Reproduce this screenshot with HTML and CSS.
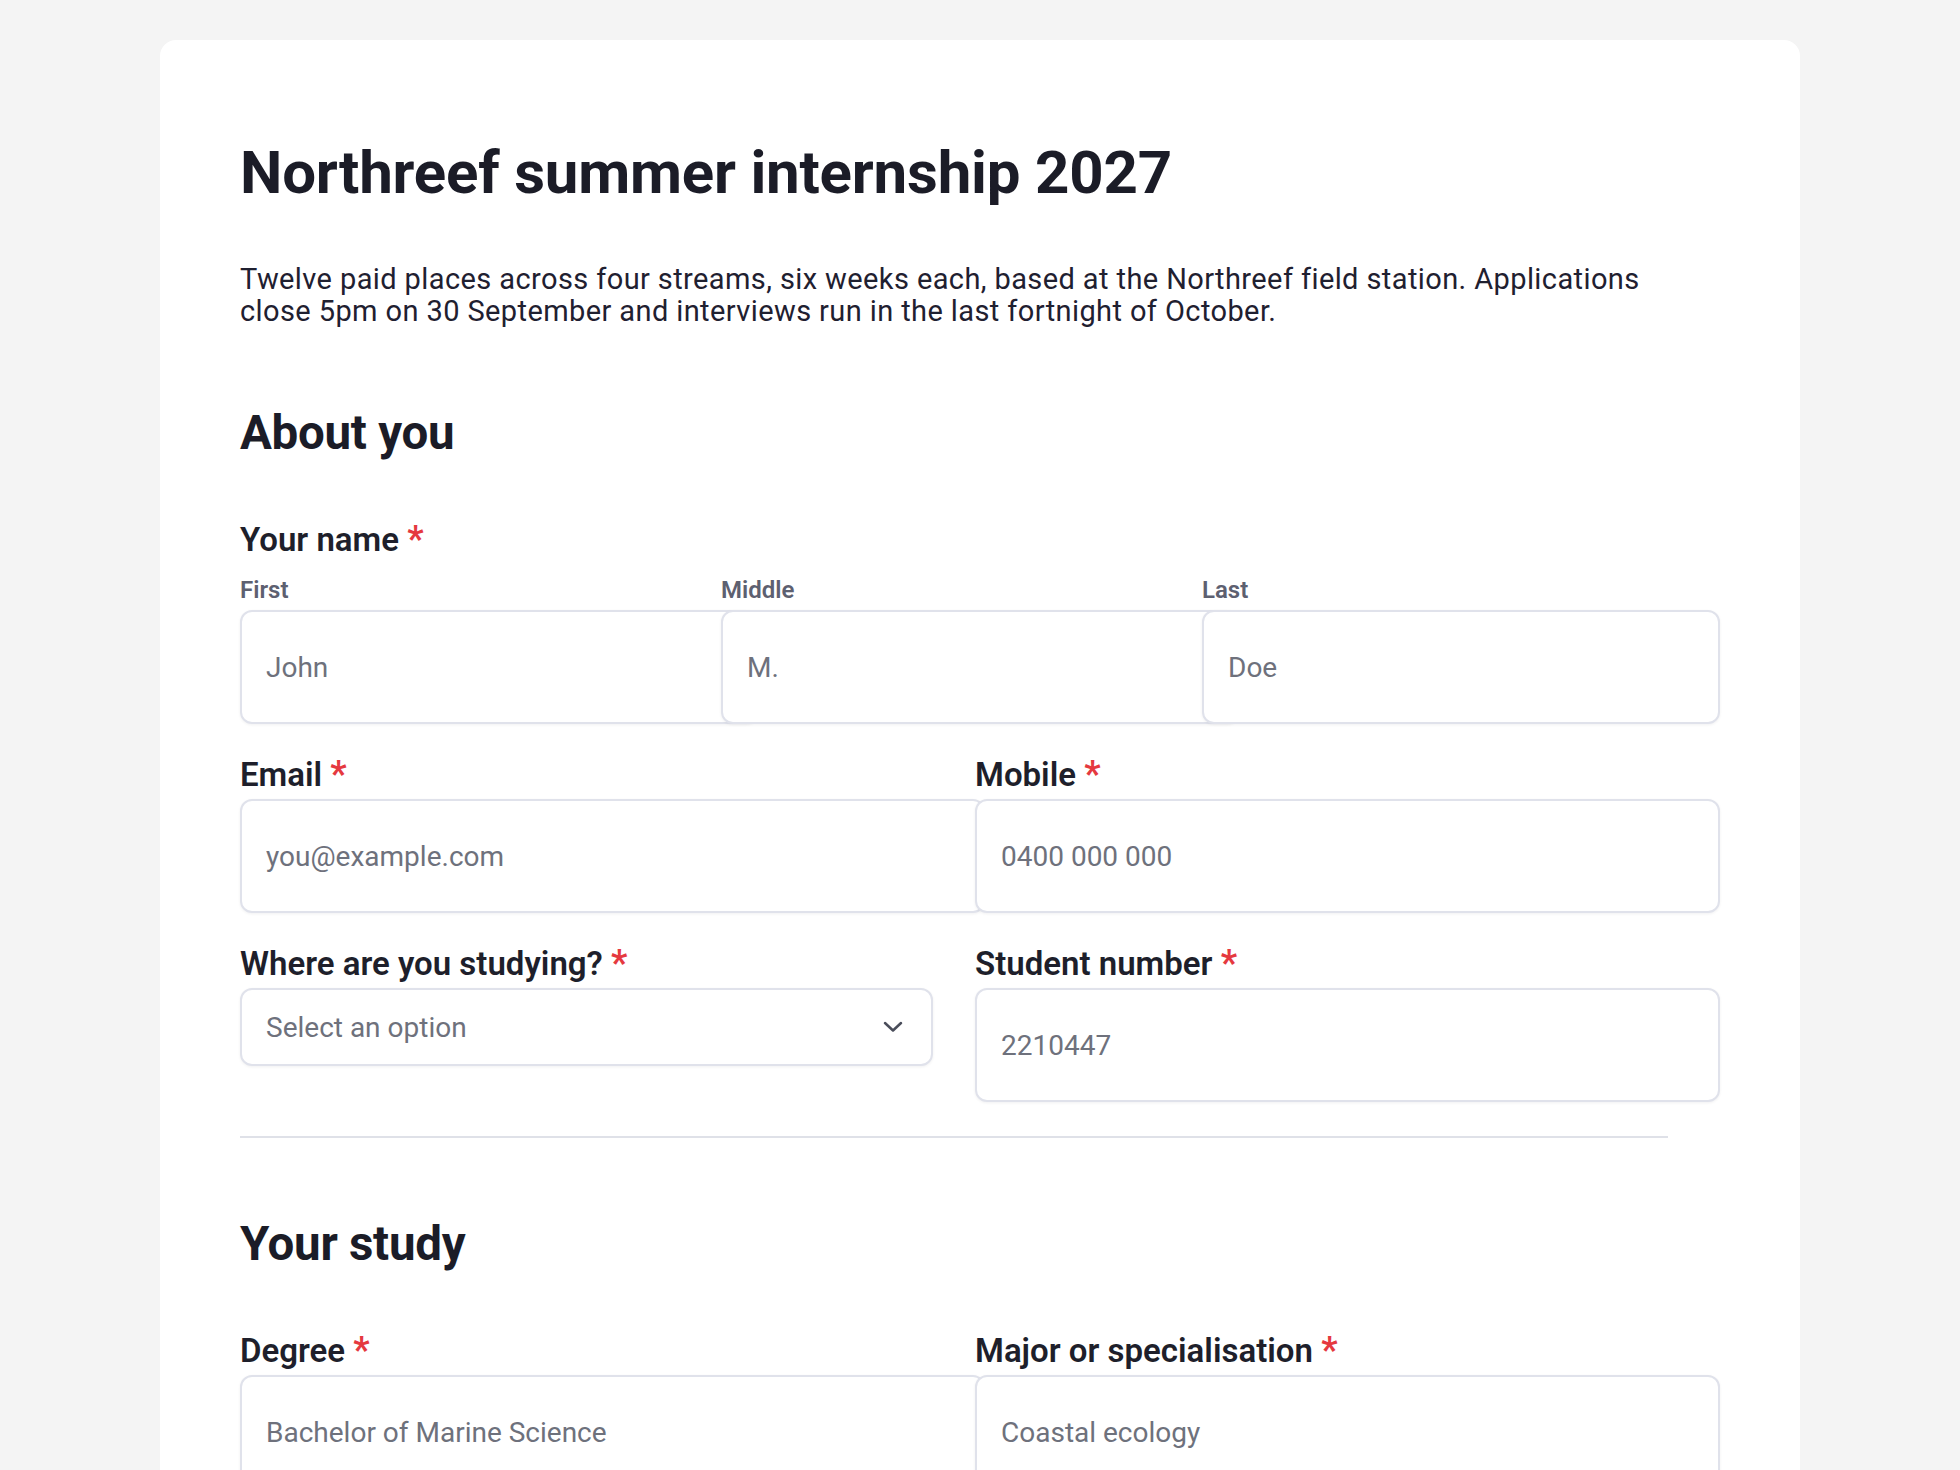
FILE: index.html
```html
<!DOCTYPE html>
<html lang="en">
<head>
<meta charset="utf-8">
<title>Northreef summer internship 2027</title>
<link rel="stylesheet" href="styles.css">
</head>
<body>
<main class="card">
  <div class="card-inner">
    <h1 class="title">Northreef summer internship 2027</h1>
    <p class="intro">Twelve paid places across four streams, six weeks each, based at the Northreef field station. Applications close 5pm on 30 September and interviews run in the last fortnight of October.</p>

    <section class="section">
      <h2 class="section-title">About you</h2>
      <div class="fields">
        <div class="field-group">
          <div class="label">Your name <span class="req">*</span></div>
          <div class="grid-3">
            <div class="field">
              <label class="sublabel" for="first">First</label>
              <input class="input" id="first" type="text" placeholder="John">
            </div>
            <div class="field">
              <label class="sublabel" for="middle">Middle</label>
              <input class="input" id="middle" type="text" placeholder="M.">
            </div>
            <div class="field">
              <label class="sublabel" for="last">Last</label>
              <input class="input" id="last" type="text" placeholder="Doe">
            </div>
          </div>
        </div>
        <div class="grid-2">
          <div class="field">
            <label class="label" for="email">Email <span class="req">*</span></label>
            <input class="input" id="email" type="email" placeholder="you@example.com">
          </div>
          <div class="field">
            <label class="label" for="mobile">Mobile <span class="req">*</span></label>
            <input class="input" id="mobile" type="tel" placeholder="0400 000 000">
          </div>
          <div class="field">
            <label class="label" for="uni">Where are you studying? <span class="req">*</span></label>
            <div class="select-wrap">
              <select class="select" id="uni">
                <option>Select an option</option>
              </select>
              <svg class="chevron" width="20" height="12" viewBox="0 0 20 12" aria-hidden="true"><path d="M2 2 L10 9.5 L18 2" fill="none" stroke="#4a4d5a" stroke-width="2.5" stroke-linecap="round" stroke-linejoin="round"/></svg>
            </div>
          </div>
          <div class="field">
            <label class="label" for="student">Student number <span class="req">*</span></label>
            <input class="input" id="student" type="text" placeholder="2210447">
          </div>
        </div>
      </div>
    </section>

    <hr class="divider">

    <section class="section">
      <h2 class="section-title">Your study</h2>
      <div class="fields">
        <div class="grid-2">
          <div class="field">
            <label class="label" for="degree">Degree <span class="req">*</span></label>
            <input class="input" id="degree" type="text" placeholder="Bachelor of Marine Science">
          </div>
          <div class="field">
            <label class="label" for="major">Major or specialisation <span class="req">*</span></label>
            <input class="input" id="major" type="text" placeholder="Coastal ecology">
          </div>
        </div>
      </div>
    </section>
  </div>
</main>
</body>
</html>
```

FILE: styles.css
```css
* {
  box-sizing: border-box;
}

html, body {
  margin: 0;
  padding: 0;
}

body {
  background: #f4f4f4;
  font-family: Roboto, "Liberation Sans", sans-serif;
  color: #1c1d29;
  padding: 40px 0 80px;
}

.card {
  max-width: 1640px;
  margin: 0 auto;
  background: #ffffff;
  border-radius: 16px;
  padding: 97px 80px 100px;
}

.card-inner {
  max-width: 1428px;
}

.title {
  margin: 0;
  font-size: 60px;
  line-height: 72px;
  font-weight: 700;
  color: #1b1c27;
  letter-spacing: -0.2px;
}

.intro {
  margin: 54px 0 0;
  font-size: 29px;
  line-height: 32px;
  font-weight: 400;
  letter-spacing: 0.4px;
  color: #1f2030;
}

.section-title {
  margin: 77px 0 0;
  font-size: 47.5px;
  line-height: 58px;
  font-weight: 700;
  color: #1b1c27;
  letter-spacing: -0.3px;
}

.fields {
  margin-top: 57px;
  display: flex;
  flex-direction: column;
  gap: 30px;
}

.label {
  display: block;
  font-size: 33px;
  line-height: 40px;
  font-weight: 600;
  color: #1e1f2b;
  margin-bottom: 4px;
}

.req {
  color: #e5393f;
  font-size: 36px;
  font-weight: 700;
}

.sublabel {
  display: block;
  font-size: 24px;
  line-height: 30px;
  font-weight: 600;
  color: #5d6070;
  margin: 11px 0 5px;
}

.field {
  min-width: 0;
}

.grid-3 {
  display: grid;
  grid-template-columns: repeat(3, 1fr);
  column-gap: 15px;
}

.grid-2 {
  display: grid;
  grid-template-columns: 1fr 1fr;
  column-gap: 42px;
  row-gap: 30px;
}

.input {
  display: block;
  box-sizing: content-box;
  width: 100%;
  height: 110px;
  padding: 0 24px;
  margin: 0;
  border: 2px solid #e0e2eb;
  border-radius: 12px;
  background: #ffffff;
  box-shadow: 0 1px 3px rgba(16, 24, 40, 0.06);
  font-family: Roboto, "Liberation Sans", sans-serif;
  font-size: 28px;
  color: #1c1d29;
  outline: none;
}

.input::placeholder {
  color: #6e717c;
  opacity: 1;
}

.select-wrap {
  position: relative;
}

.select {
  display: block;
  width: 100%;
  height: 78px;
  padding: 0 60px 0 24px;
  margin: 0;
  border: 2px solid #e0e2eb;
  border-radius: 12px;
  background: #ffffff;
  box-shadow: 0 1px 3px rgba(16, 24, 40, 0.06);
  font-family: Roboto, "Liberation Sans", sans-serif;
  font-size: 28px;
  color: #6e717c;
  appearance: none;
  -webkit-appearance: none;
  outline: none;
}

.chevron {
  position: absolute;
  right: 30px;
  top: 50%;
  margin-top: -6px;
  pointer-events: none;
}

.divider {
  margin: 34px 0 0;
  border: 0;
  height: 2px;
  background: #dfe1e8;
}
```
